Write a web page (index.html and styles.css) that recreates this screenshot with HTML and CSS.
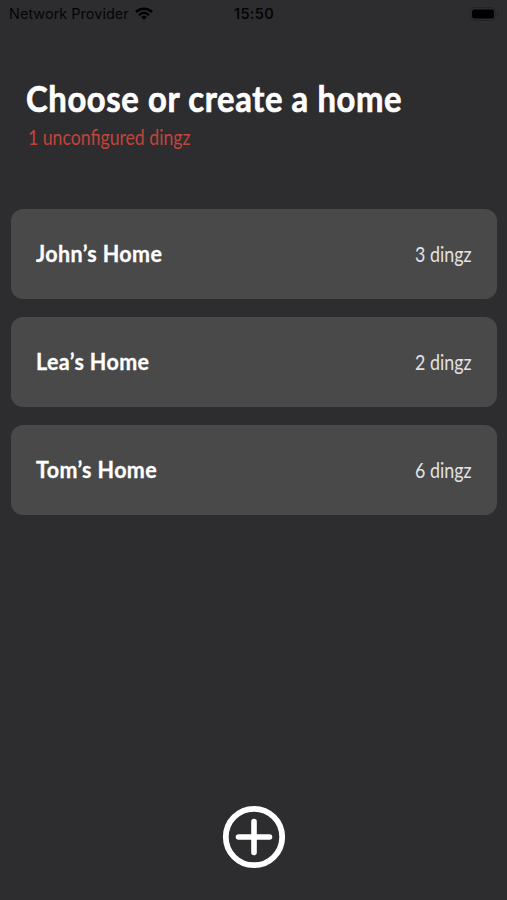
FILE: index.html
```html
<!DOCTYPE html>
<html lang="en">
<head>
<meta charset="utf-8">
<title>Homes</title>
<link rel="stylesheet" href="styles.css">
</head>
<body>
<div class="screen">
  <div class="status">
    <div class="carrier"><span>Network Provider</span>
      <svg class="wifi" viewBox="0 0 18 13"><g fill="none" stroke="#000" stroke-width="2.5"><path d="M.9 5C5.400.7 12.600.7 17.100 5"/><path d="M3.900 8.100Q9 3.500 14.100 8.100"/></g><path d="M9 12.800 6 9.900Q9 7.500 12 9.900Z"/></svg>
    </div>
    <time class="clock">15:50</time>
    <svg class="battery" viewBox="0 0 29 14"><rect x=".5" y=".5" width="25" height="13" rx="4" fill="none" stroke="#232325"/><rect x="2" y="2.500" width="22" height="9" rx="2.500"/><path d="M27 4.500Q28.500 5.500 28.500 7T27 9.500Z" fill="#232325"/></svg>
  </div>
  <header class="heading">
    <h1><span class="title">Choose or create a home</span></h1>
    <p><span class="notice">1 unconfigured dingz</span></p>
  </header>
  <main class="homes">
    <button class="home"><span class="name">John’s Home</span><span class="count">3 dingz</span></button>
    <button class="home"><span class="name">Lea’s Home</span><span class="count">2 dingz</span></button>
    <button class="home"><span class="name">Tom’s Home</span><span class="count">6 dingz</span></button>
  </main>
  <footer class="footer">
    <button class="add" aria-label="Add home"><svg viewBox="0 0 64 64" fill="none" stroke="#fff"><circle cx="32" cy="32" r="28.200" stroke-width="5.800"/><path d="M32 16.500v31M16.500 32h31" stroke-width="5.600" stroke-linecap="round"/></svg></button>
  </footer>
</div>
</body>
</html>
```
FILE: styles.css
```css
* { box-sizing: border-box; }
body { margin: 0; background: #2d2d2f; }
button { border: 0; padding: 0; margin: 0; background: none; font: inherit; color: inherit; }
.screen { height: 900px; display: flex; flex-direction: column; font-family: Lato, "Open Sans", sans-serif; color: #fff; overflow: hidden; }
.status { height: 27px; padding: 0 8px 0 9px; display: grid; grid-template-columns: 1fr auto 1fr; align-items: center; font-family: Inter, sans-serif; color: #050506; }
.carrier { display: flex; align-items: center; gap: 6px; font-size: 14.500px; letter-spacing: 0; white-space: nowrap; }
.wifi { width: 18px; height: 13px; }
.clock { font-size: 14.500px; font-weight: 600; letter-spacing: .3px; }
.battery { width: 29px; height: 14px; justify-self: end; }
.heading { height: 182px; padding: 48px 26px 0; }
h1, p { margin: 0; white-space: nowrap; }
h1 { font-size: 37px; line-height: 46px; font-weight: 700; letter-spacing: .7px; -webkit-text-stroke: .7px #fff; }
p { padding-left: 2px; font-size: 21px; line-height: 32px; color: #c2443a; font-weight: 400; }
.title, .notice, .name, .count { display: inline-block; transform-origin: left; }
.title { transform: scaleX(.886); }
.notice { transform: scaleX(.84); }
.homes { padding: 0 10px 0 11px; display: grid; gap: 18px; }
.home { height: 90px; padding: 0 26px 2px 25px; border-radius: 12px; background: #49494a; display: flex; align-items: center; justify-content: space-between; }
.name { font-size: 23px; font-weight: 700; letter-spacing: .4px; transform: scaleX(.935); -webkit-text-stroke: .3px #fff; }
.count { font-size: 21px; color: #e2e2e3; transform: scaleX(.85); transform-origin: right; }
.footer { margin-top: auto; padding-bottom: 31px; display: flex; justify-content: center; }
.add, .add svg { display: block; width: 64px; height: 64px; }
```
